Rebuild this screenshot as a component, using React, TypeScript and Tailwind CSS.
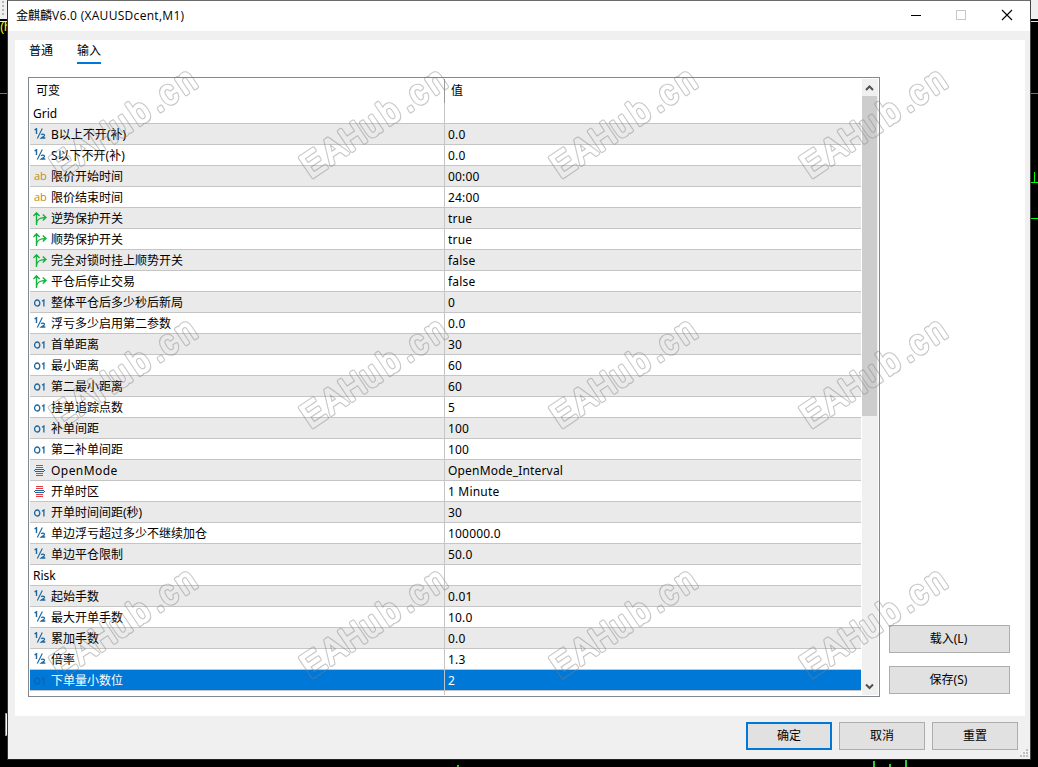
import { useState } from 'react';

type ParamType = 'group' | 'double' | 'string' | 'bool' | 'int' | 'enum';

interface Param {
  type: ParamType;
  name: string;
  value: string;
}

const params: Param[] = [
  { type: 'group', name: 'Grid', value: '' },
  { type: 'double', name: 'B以上不开(补)', value: '0.0' },
  { type: 'double', name: 'S以下不开(补)', value: '0.0' },
  { type: 'string', name: '限价开始时间', value: '00:00' },
  { type: 'string', name: '限价结束时间', value: '24:00' },
  { type: 'bool', name: '逆势保护开关', value: 'true' },
  { type: 'bool', name: '顺势保护开关', value: 'true' },
  { type: 'bool', name: '完全对锁时挂上顺势开关', value: 'false' },
  { type: 'bool', name: '平仓后停止交易', value: 'false' },
  { type: 'int', name: '整体平仓后多少秒后新局', value: '0' },
  { type: 'double', name: '浮亏多少启用第二参数', value: '0.0' },
  { type: 'int', name: '首单距离', value: '30' },
  { type: 'int', name: '最小距离', value: '60' },
  { type: 'int', name: '第二最小距离', value: '60' },
  { type: 'int', name: '挂单追踪点数', value: '5' },
  { type: 'int', name: '补单间距', value: '100' },
  { type: 'int', name: '第二补单间距', value: '100' },
  { type: 'enum', name: 'OpenMode', value: 'OpenMode_Interval' },
  { type: 'enum', name: '开单时区', value: '1 Minute' },
  { type: 'int', name: '开单时间间距(秒)', value: '30' },
  { type: 'double', name: '单边浮亏超过多少不继续加仓', value: '100000.0' },
  { type: 'double', name: '单边平仓限制', value: '50.0' },
  { type: 'group', name: 'Risk', value: '' },
  { type: 'double', name: '起始手数', value: '0.01' },
  { type: 'double', name: '最大开单手数', value: '10.0' },
  { type: 'double', name: '累加手数', value: '0.0' },
  { type: 'double', name: '倍率', value: '1.3' },
  { type: 'int', name: '下单量小数位', value: '2' },
];

function TypeIcon({ type, selected }: { type: ParamType; selected: boolean }) {
  if (type === 'string') {
    return <span className="w-[17px] shrink-0 font-['Open_Sans','Noto_Sans',sans-serif] text-[11px] leading-5 text-[#c08a1c]">ab</span>;
  }
  if (type === 'int') {
    return (
      <svg className="mt-px mr-[5px] h-2 w-3 shrink-0" viewBox="0 0 12 8" fill="none" stroke={selected ? '#0865b4' : '#1c679f'} strokeWidth="1.3">
        <ellipse cx="3.2" cy="4" rx="2.6" ry="3" />
        <path d="M8 2.2 9.9 1v6.6" />
      </svg>
    );
  }
  if (type === 'double') {
    return (
      <svg className="mr-[5px] h-3 w-3 shrink-0" viewBox="0 0 12 12" fill="none" stroke="#1c679f">
        <path d="M.6 1.9 2.5.8V6" strokeWidth="1.4" />
        <path d="M8.3.4 3.3 10.6" strokeWidth="1.1" />
        <path d="M7.2 6.9c.6-1 3.3-1 3.3.5 0 1-1.9 1.6-3.2 2.6h4" strokeWidth="1.3" />
      </svg>
    );
  }
  if (type === 'bool') {
    return (
      <svg className="mr-1 -ml-px h-[13px] w-[14px] shrink-0" viewBox="0 0 14 13" fill="none" stroke="#16b23c" strokeWidth="1.4">
        <path d="M3.5 13V.8M.4 4 3.5.8 6.6 4M3.5 11.5C4 7.5 6 5.5 13 5.5M9.8 2.4 13 5.5 9.8 8.6" />
      </svg>
    );
  }
  return (
    <svg className="mt-px mr-[6px] h-[11px] w-[11px] shrink-0" viewBox="0 0 11 11" shapeRendering="crispEdges">
      <path d="M2 0h7v1H2zM2 2h7v1H2zM2 8h7v1H2zM2 10h7v1H2z" fill="#e03c3c" />
      <path d="M1 4h9v1H1zM0 5h1v1H0zM10 5h1v1h-1zM1 6h9v1H1z" fill="#1766a6" />
    </svg>
  );
}

function PushButton({ label, className, primary }: { label: string; className: string; primary?: boolean }) {
  return (
    <button
      type="button"
      className={`flex h-7 items-center justify-center bg-[#e1e1e1] pb-px ${primary ? 'border-2 border-[#0078d7]' : 'border border-[#adadad]'} ${className}`}
    >
      {label}
    </button>
  );
}

// Chart terminal that stays visible around the edges of the dialog
function Terminal() {
  return (
    <svg className="absolute inset-0" width="1038" height="767" shapeRendering="crispEdges">
      <rect width="1038" height="767" fill="#000" />
      <rect width="1038" height="19" fill="#f0f0f0" />
      <rect y="21" width="1038" height="1" fill="#e8e8e8" />
      <path d="M3 1v16" stroke="#b5b5b5" strokeWidth="2" strokeDasharray="2 2" />
      <path d="M0 93.5h8M1030 93.5h8" stroke="#6d7480" />
      <text x="0" y="31" fill="#ffff00" fontSize="12" fontFamily="Liberation Sans, sans-serif">(h</text>
      <path d="M1030 182.5h8M1034.5 172v11M1030 218.5h8" stroke="#00ff00" />
      <rect x="5.5" y="713.5" width="6" height="22" fill="#fff" stroke="#00ff00" />
      <path d="M458 765v2M874 761v6M890 764v3M906 759v8" stroke="#32cd32" strokeWidth="2" />
    </svg>
  );
}

const marks = [0, 250, 500].flatMap((y) => [0, 250, 500, 750].map((x) => ({ x, y })));
const markX = '-2.4 24.4 48.7 74.5 99.4 125.5 137.2 159.5';

function Watermark() {
  return (
    <svg className="pointer-events-none absolute inset-0" width="1038" height="767">
      <defs>
        <mask id="outline" maskUnits="userSpaceOnUse" x="0" y="0" width="1038" height="767">
          {marks.map(({ x, y }) => (
            <g
              key={`${x}-${y}`}
              transform={`translate(${x + 62.5} ${y + 177.5}) rotate(-34) scale(.92 1)`}
              fontFamily="Liberation Sans, sans-serif"
              fontSize="34.5"
              strokeLinejoin="round"
            >
              <text x={markX} fill="#fff" stroke="#fff" strokeWidth="4">EAHub.cn</text>
              <text x={markX} fill="#000" stroke="#000" strokeWidth="1.8" aria-hidden="true">EAHub.cn</text>
            </g>
          ))}
        </mask>
      </defs>
      <rect width="1038" height="767" fill="#808080" fillOpacity=".45" mask="url(#outline)" />
    </svg>
  );
}

export default function App() {
  const [selected, setSelected] = useState(27);

  return (
    <div className="relative h-[767px] w-[1038px] overflow-hidden pl-[7px] font-['Noto_Sans','Noto_Sans_CJK_SC',sans-serif] text-[12px] leading-5 text-black">
      <Terminal />

      <div className="relative flex h-[760px] w-[1024px] flex-col border border-t-[#6b6b6b] border-r-[#444] border-b-[#222] border-l-[#333] bg-[#f0f0f0]">
        <div className="flex h-[30px] shrink-0 items-center bg-white pl-2">
          <span className="flex-1 font-['Open_Sans','Noto_Sans_CJK_SC',sans-serif]">
            金麒麟<span className="tracking-[.3px]">V6.0 (XAUUSDcent,M1)</span>
          </span>
          <svg width="119" height="30" fill="none" shapeRendering="crispEdges">
            <path d="M0 14.5h10" stroke="#000" />
            <rect x="45.5" y="9.5" width="9" height="9" stroke="#c8c8c8" />
            <path d="m91 9 10 10m0-10L91 19" stroke="#000" strokeWidth="1.1" shapeRendering="auto" />
          </svg>
        </div>

        <div className="mt-[9px] mr-[5px] ml-[7px] flex h-[676px] shrink-0 flex-col bg-white">
          <div className="flex h-[37px] shrink-0 gap-6 pl-[14px]">
            <button type="button" className="h-6 border-b-2 border-transparent">普通</button>
            <button type="button" className="h-6 border-b-2 border-[#0078d7]">输入</button>
          </div>

          <div className="flex pl-[13px]">
            <div className="flex h-[620px] w-[852px] border border-[#828790] p-px">
              <div className="flex w-[831px] flex-col">
                <div className="flex h-6 shrink-0 items-center">
                  <span className="w-[414px] pl-[6px]">可变</span>
                  <span className="h-full w-px bg-[#9a9a9a]" />
                  <span className="pl-[6px]">值</span>
                </div>
                {params.map((param, i) => {
                  const isSelected = i === selected;
                  const tone = isSelected ? 'bg-[#0078d7] text-white' : i % 2 === 1 ? 'bg-[#eaeaea]' : 'bg-white';
                  return (
                    <div key={i} onClick={() => setSelected(i)} className={`flex h-[21px] shrink-0 border-b border-[#c5c5c5] ${tone}`}>
                      <div className={`flex w-[414px] items-center ${param.type === 'group' ? 'pl-[3px]' : 'pl-1'}`}>
                        {param.type !== 'group' && <TypeIcon type={param.type} selected={isSelected} />}
                        <span className={`pt-0.5 ${param.name === 'OpenMode' ? 'tracking-[.45px]' : ''}`}>{param.name}</span>
                      </div>
                      <div className="flex-1 border-l border-[#c5c5c5] pt-px pl-[3px] tracking-[.18px]">{param.value}</div>
                    </div>
                  );
                })}
                <div className="ml-[414px] flex-1 border-l border-[#c5c5c5]" />
              </div>

              <div className="ml-px flex w-4 flex-col bg-[#f0f0f0]">
                <svg width="16" height="17" fill="none" stroke="#505050" strokeWidth="2">
                  <path d="m4 11 3.5-3.5L11 11" />
                </svg>
                <div className="h-[320px] w-[15px] bg-[#cdcdcd]" />
                <svg className="mt-auto" width="16" height="17" fill="none" stroke="#505050" strokeWidth="2">
                  <path d="m4 6.5 3.5 3.5L11 6.5" />
                </svg>
              </div>
            </div>

            <div className="ml-[9px] flex flex-col justify-end gap-[13px] pb-[3px]">
              <PushButton label="载入(L)" className="w-[121px] pr-0.5" />
              <PushButton label="保存(S)" className="w-[121px] pr-0.5" />
            </div>
          </div>
        </div>

        <div className="flex flex-1 justify-end gap-[7px] pt-[6px] pr-3">
          <PushButton label="确定" className="w-[86px]" primary />
          <PushButton label="取消" className="w-[86px]" />
          <PushButton label="重置" className="w-[86px]" />
        </div>

        {/* Resize grip */}
        <svg className="absolute right-[2px] bottom-[2px]" width="8" height="8" fill="#bfbfbf" shapeRendering="crispEdges">
          <path d="M6 0h2v2H6zM3 3h2v2H3zM6 3h2v2H6zM0 6h2v2H0zM3 6h2v2H3zM6 6h2v2H6z" />
        </svg>
      </div>

      <Watermark />
    </div>
  );
}
